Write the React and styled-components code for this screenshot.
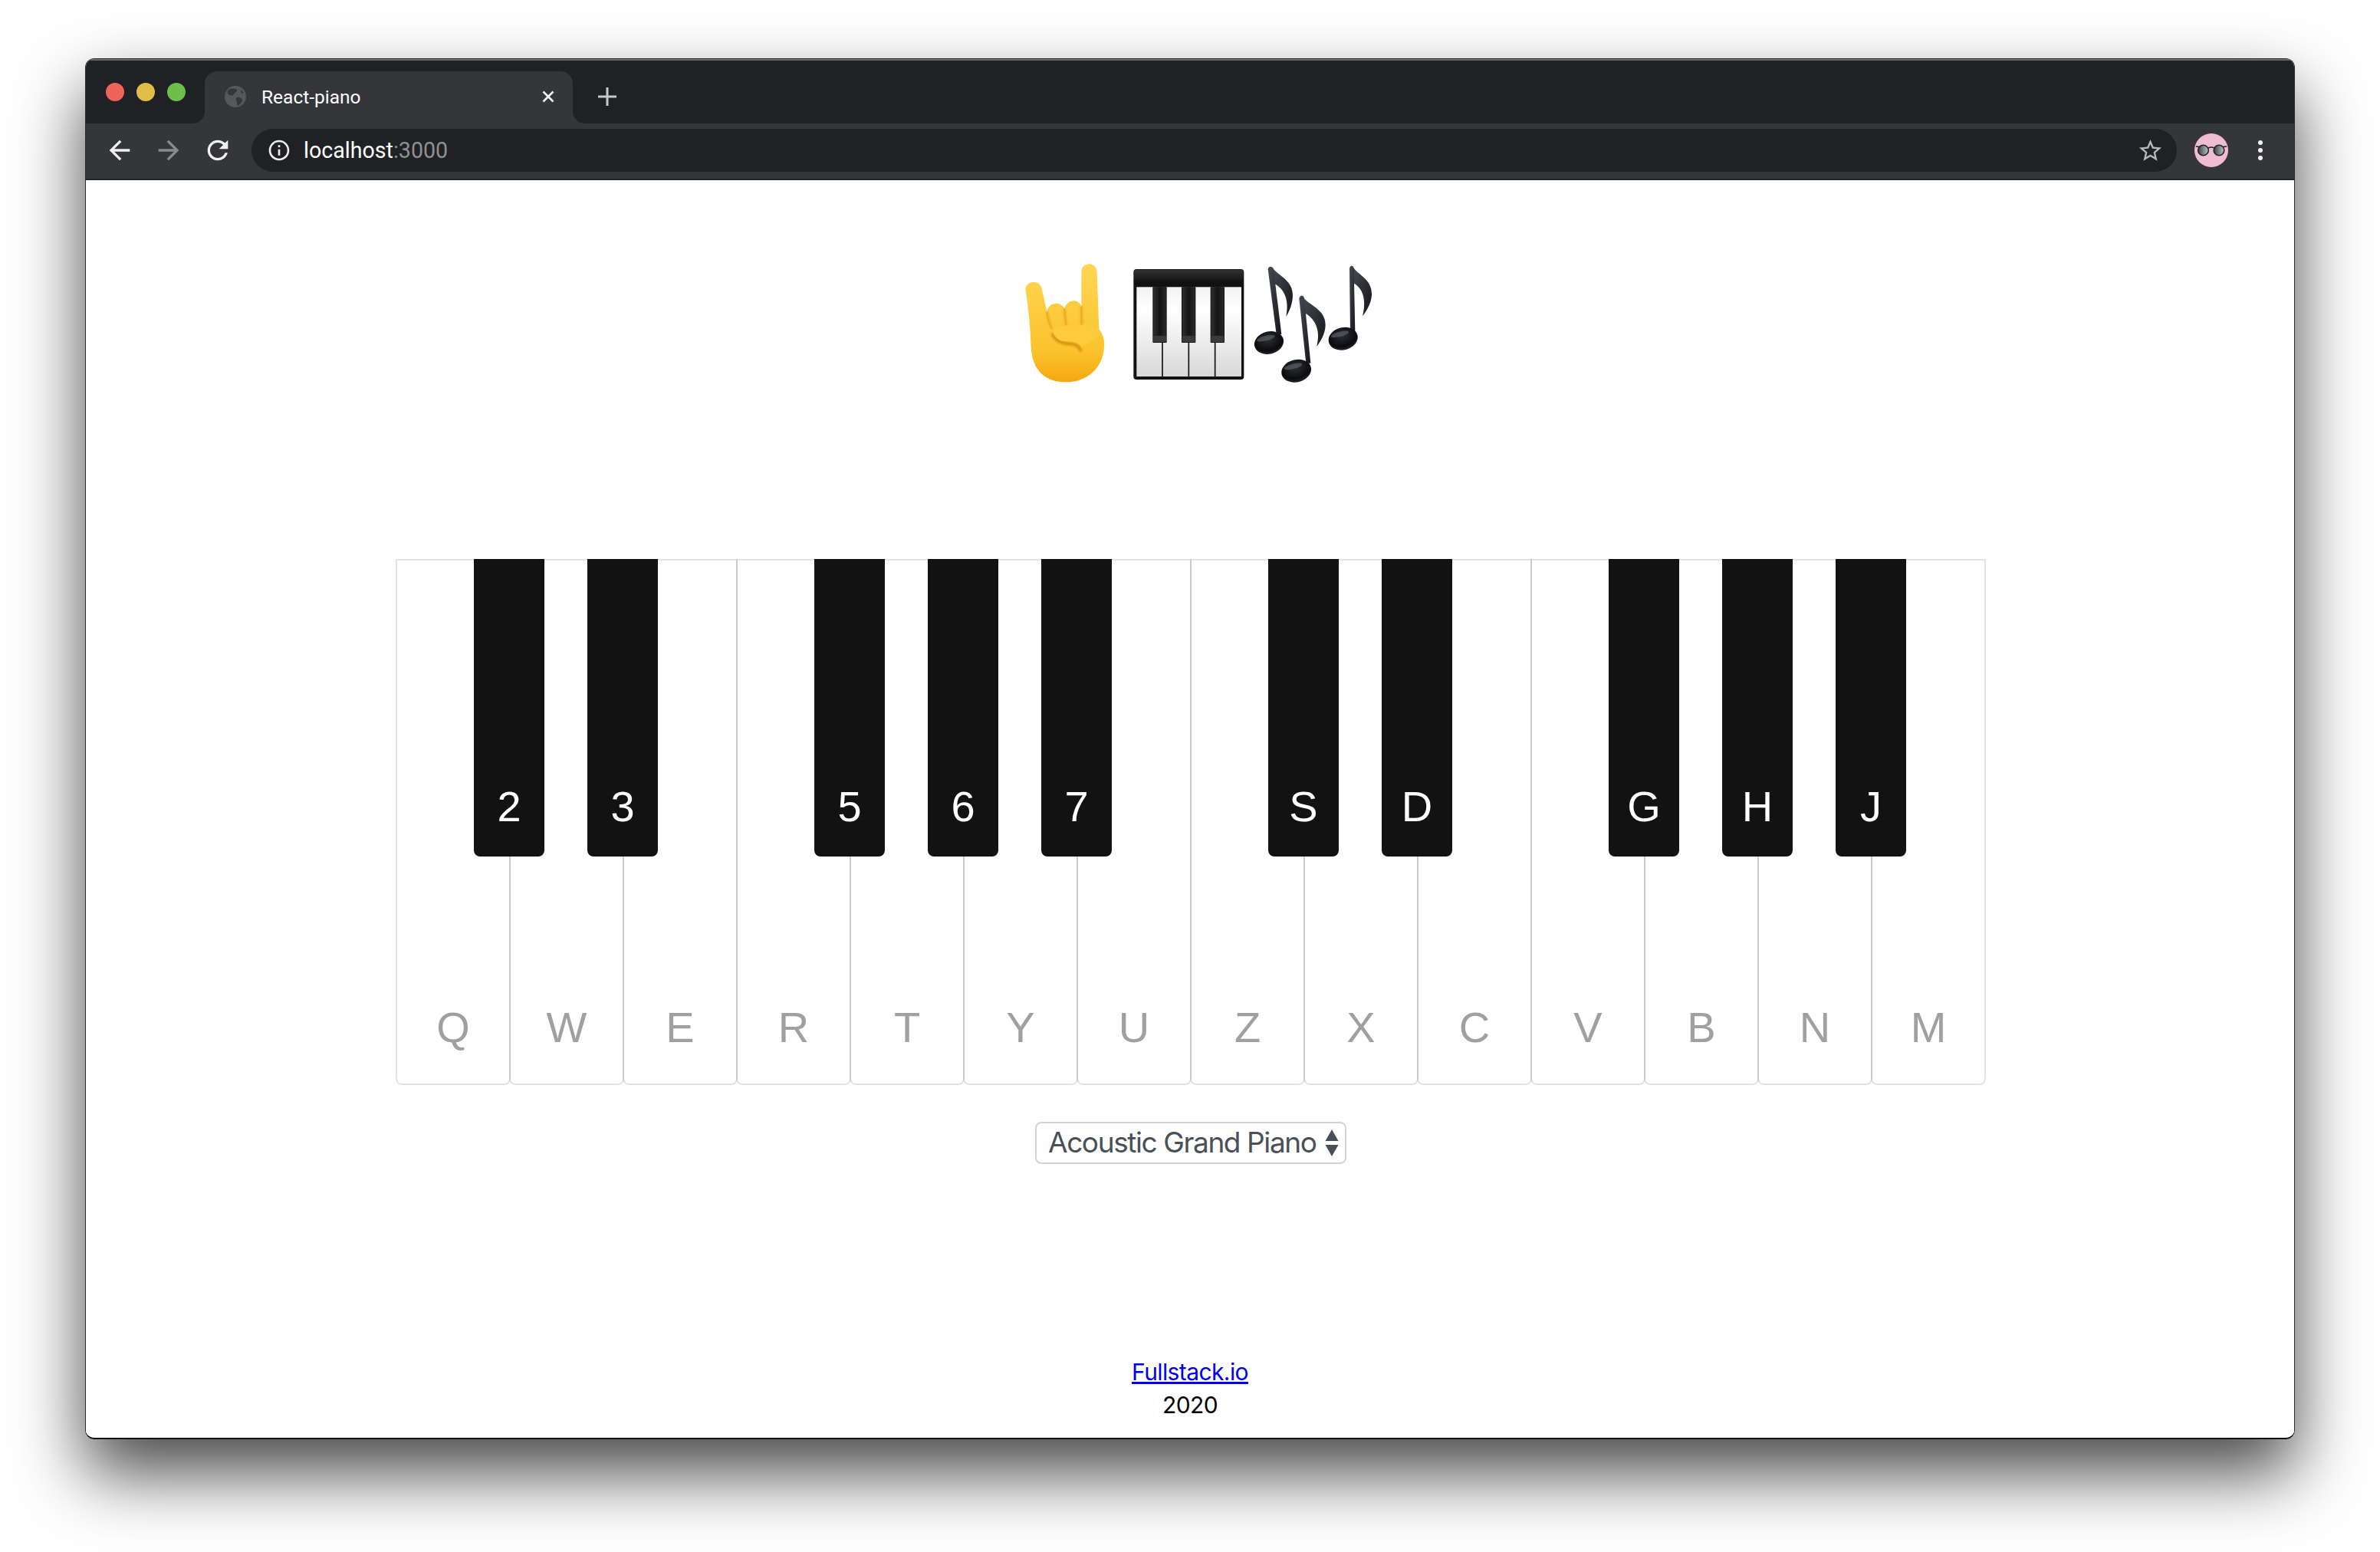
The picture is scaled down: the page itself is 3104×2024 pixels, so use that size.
import React from "react";
import styled, { createGlobalStyle } from "styled-components";

const Global = createGlobalStyle`
  html, body { margin: 0; padding: 0; background: #fff; }
  body { width: 3104px; height: 2024px; overflow: hidden; }
`;

const Page = styled.div`
  width: 3104px;
  height: 2024px;
  box-sizing: border-box;
  padding: 76px 111px 147px;
  display: flex;
  background: #fff;
`;

const Window = styled.div`
  flex: 1;
  display: flex;
  flex-direction: column;
  border-radius: 12px;
  overflow: hidden;
  border: 1.5px solid #2c2c2e;
  border-bottom: 2px solid #111;
  box-shadow: 0 44px 90px rgba(0, 0, 0, 0.72);
`;

const TitleBar = styled.div`
  height: 84px;
  flex: none;
  display: flex;
  align-items: flex-end;
  background: #202124;
  box-shadow: inset 0 2px 0 #6a6a6c;
  padding-left: 155px;
`;

const Lights = styled.div`
  position: absolute;
  display: flex;
  gap: 16px;
  margin-left: -129px;
  margin-bottom: 29px;
`;

const Light = styled.span`
  width: 24px;
  height: 24px;
  border-radius: 50%;
  background: ${(p) => p.$color};
`;

const Tab = styled.div`
  position: relative;
  width: 480px;
  height: 68px;
  box-sizing: border-box;
  background: #35363a;
  border-radius: 16px 16px 0 0;
  display: flex;
  align-items: center;
  padding: 0 16px 2px 26px;
  &::before, &::after {
    content: "";
    position: absolute;
    bottom: 0;
    width: 16px;
    height: 16px;
  }
  &::before {
    left: -16px;
    background: radial-gradient(circle at 0 0, #202124 15.5px, #35363a 16.5px);
  }
  &::after {
    right: -16px;
    background: radial-gradient(circle at 100% 0, #202124 15.5px, #35363a 16.5px);
  }
`;

const TabTitle = styled.span`
  flex: 1;
  margin-left: 20px;
  font: 400 24.5px "Roboto", sans-serif;
  color: #fff;
`;

const NewTab = styled.svg`
  width: 26px;
  height: 26px;
  margin: 0 0 22px 32px;
`;

const Toolbar = styled.div`
  height: 74px;
  flex: none;
  box-sizing: border-box;
  background: #35363a;
  border-bottom: 2px solid #202124;
  display: flex;
  align-items: center;
  padding: 0 41px 2px 24px;
`;

const NavIcon = styled.svg`
  width: 40px;
  height: 40px;
  margin-right: ${(p) => p.$gap || 24}px;
  fill: ${(p) => p.$color || "#f1f1f2"};
  flex: none;
`;

const Omnibox = styled.div`
  flex: 1;
  height: 56px;
  border-radius: 28px;
  background: #202124;
  display: flex;
  align-items: center;
  padding: 0 0 0 20px;
`;

const InfoIcon = styled.svg`
  width: 32px;
  height: 32px;
  fill: #ededee;
  flex: none;
`;

const Url = styled.div`
  flex: 1;
  margin-left: 16px;
  font: 400 28.6px "Roboto", sans-serif;
  color: #fff;
  span { color: #8f9093; }
`;

const StarIcon = styled.svg`
  width: 35px;
  height: 35px;
  fill: #b7b8b9;
  margin-right: 17px;
`;

const Avatar = styled.svg`
  width: 46px;
  height: 46px;
  margin: 0 38px 0 22px;
  flex: none;
`;

const Dots = styled.div`
  display: flex;
  flex-direction: column;
  gap: 4px;
  i { width: 6px; height: 6px; border-radius: 50%; background: #f1f1f2; }
`;

const Content = styled.main`
  flex: 1;
  min-height: 0;
  background: #fff;
  display: flex;
  flex-direction: column;
  align-items: center;
`;

const Hero = styled.div`
  display: flex;
  margin-top: 106px;
  height: 162px;
`;

const Emoji = styled.svg`
  width: 162px;
  height: 162px;
`;

const Keyboard = styled.div`
  display: flex;
  margin-top: 226px;
  margin-left: 2px;
`;

const WhiteKey = styled.div`
  position: relative;
  width: 150px;
  height: 686px;
  box-sizing: border-box;
  margin-left: ${(p) => (p.$first ? 0 : -2)}px;
  border: 2px solid rgba(0, 0, 0, 0.11);
  border-radius: 0 0 8px 8px;
  display: flex;
  justify-content: center;
  align-items: flex-end;
  padding-bottom: 40px;
  font: 400 56px/1.2 "Liberation Sans", sans-serif;
  color: #a0a0a0;
`;

const BlackKey = styled.div`
  position: absolute;
  z-index: 1;
  top: -2px;
  left: 100px;
  width: 92px;
  height: 388px;
  box-sizing: border-box;
  background: #121212;
  border-radius: 0 0 8px 8px;
  display: flex;
  justify-content: center;
  align-items: flex-end;
  padding-bottom: 32px;
  color: #fff;
`;

const SelectWrap = styled.div`
  position: relative;
  margin: 48px 0 0 2px;
  width: 406px;
  height: 55px;
`;

const Select = styled.select`
  appearance: none;
  width: 100%;
  height: 100%;
  box-sizing: border-box;
  background: #fff;
  border: 2px solid #ced4da;
  border-radius: 8px;
  padding: 0 0 2px 15px;
  font: 400 37px "Inter", sans-serif;
  letter-spacing: -1.4px;
  color: #495057;
`;

const Carets = styled.svg`
  position: absolute;
  right: 10px;
  top: 10px;
  width: 18px;
  height: 36px;
  fill: #495057;
  pointer-events: none;
`;

const Footer = styled.footer`
  margin-top: auto;
  padding-bottom: 20px;
  text-align: center;
  font: 400 30px/45px "Inter", sans-serif;
  letter-spacing: -0.6px;
  color: #000;
  a { display: block; color: #0000ee; margin-bottom: -2px; }
`;

const KEYS = [
  ["Q", "2"], ["W", "3"], ["E"], ["R", "5"], ["T", "6"], ["Y", "7"], ["U"],
  ["Z", "S"], ["X", "D"], ["C"], ["V", "G"], ["B", "H"], ["N", "J"], ["M"],
];

function Note({ head, stem, flag }) {
  return (
    <g>
      <path d={flag} fill="url(#noteFlag)" />
      <path d={stem} fill="url(#noteFlag)" />
      <ellipse cx={head[0]} cy={head[1]} rx={head[2]} ry={head[3]} transform={`rotate(-14 ${head[0]} ${head[1]})`} fill="url(#noteHead)" />
      <ellipse cx={head[0] - 8} cy={head[1] - 20} rx={head[2] * 0.62} ry={head[3] * 0.22} transform={`rotate(-14 ${head[0]} ${head[1]})`} fill="#6b6f75" opacity="0.55" />
    </g>
  );
}

function HandEmoji() {
  return (
    <Emoji viewBox="27 60 486 486">
      <defs>
        <linearGradient id="hand" x1="0" y1="0" x2="0" y2="1">
          <stop offset="0" stopColor="#ffd655" />
          <stop offset="0.75" stopColor="#fbc22c" />
          <stop offset="1" stopColor="#f3a810" />
        </linearGradient>
        <filter id="soft" x="-20%" y="-20%" width="140%" height="140%">
          <feGaussianBlur stdDeviation="5" />
        </filter>
      </defs>
      <path fill="url(#hand)" d="M113 175C110 152 128 140 146 140C165 140 175 155 178 175L196 255C200 235 215 224 232 224C248 224 260 232 265 245C270 225 285 214 300 214C315 214 326 222 331 235L331 100C331 82 345 70 362 70C380 70 392 85 392 103L400 325C416 345 423 368 420 395C415 480 350 532 270 532C185 532 138 480 134 395C132 340 128 270 113 175Z" />
      <path d="M197 258C199 282 205 302 216 322M265 245C266 270 268 290 272 310M331 235L332 308" stroke="#e6a512" strokeWidth="7" fill="none" filter="url(#soft)" />
      <path d="M196 255C198 280 204 300 214 322M265 245C266 270 268 290 272 310M331 235L332 308" stroke="#e8aa16" strokeWidth="3" fill="none" />
      <path d="M218 345C232 372 255 382 290 382C312 384 322 392 328 408" stroke="#d88f0c" strokeWidth="12" fill="none" strokeLinecap="round" filter="url(#soft)" />
      <path fill="#fdcb3c" d="M222 335C222 318 238 312 255 312L340 308C370 310 395 320 404 335C392 372 350 376 332 396C322 376 300 374 262 372C240 368 222 354 222 335Z" />
    </Emoji>
  );
}

function PianoEmoji() {
  return (
    <Emoji viewBox="513 60 486 486">
      <defs>
        <linearGradient id="pianoTop" x1="0" y1="0" x2="0" y2="1">
          <stop offset="0" stopColor="#323234" />
          <stop offset="1" stopColor="#161617" />
        </linearGradient>
        <linearGradient id="pianoWhite" x1="0" y1="0" x2="0" y2="1">
          <stop offset="0" stopColor="#f2f2f2" />
          <stop offset="0.25" stopColor="#ffffff" />
          <stop offset="1" stopColor="#d8d8d8" />
        </linearGradient>
        <linearGradient id="pianoBlack" x1="0" y1="0" x2="1" y2="0">
          <stop offset="0" stopColor="#303030" />
          <stop offset="0.5" stopColor="#141414" />
          <stop offset="1" stopColor="#2a2a2a" />
        </linearGradient>
      </defs>
      <rect x="535" y="90" width="432" height="432" rx="12" fill="#111" />
      <rect x="537" y="92" width="428" height="43" rx="7" fill="url(#pianoTop)" />
      <rect x="547" y="160" width="410" height="350" fill="url(#pianoWhite)" />
      <path d="M648 378V512M751 378V512M854 378V512" stroke="#111" strokeWidth="5" />
      {[610, 723, 836].map((x) => (
        <g key={x}>
          <rect x={x} y="160" width="55" height="218" rx="3" fill="#111" />
          <rect x={x + 3} y="160" width="49" height="190" fill="url(#pianoBlack)" />
          <rect x={x + 2} y="350" width="51" height="26" rx="2" fill="#3a3a3a" />
        </g>
      ))}
    </Emoji>
  );
}

function NotesEmoji() {
  return (
    <Emoji viewBox="999 60 486 486">
      <defs>
        <linearGradient id="noteFlag" x1="0" y1="0" x2="1" y2="1">
          <stop offset="0" stopColor="#474a52" />
          <stop offset="1" stopColor="#15161a" />
        </linearGradient>
        <radialGradient id="noteHead" cx="0.5" cy="0.35" r="0.7">
          <stop offset="0" stopColor="#2c2e33" />
          <stop offset="0.7" stopColor="#0c0c0f" />
          <stop offset="1" stopColor="#2b2d33" />
        </radialGradient>
      </defs>
      <Note
        head={[1065, 378, 58, 44]}
        stem="M1061 90C1064 76 1080 78 1083 92L1114 345L1094 345Z"
        flag="M1078 82C1095 115 1160 130 1158 195C1157 225 1145 255 1132 276C1142 225 1135 175 1088 148Z"
      />
      <Note
        head={[1172, 488, 59, 44]}
        stem="M1183 205C1186 190 1200 190 1203 204L1228 458L1210 458Z"
        flag="M1196 196C1215 230 1288 245 1286 310C1285 340 1270 370 1252 392C1265 340 1255 290 1205 262Z"
      />
      <Note
        head={[1355, 362, 58, 44]}
        stem="M1380 88C1381 74 1395 74 1397 88L1402 335L1383 335Z"
        flag="M1392 78C1408 112 1468 125 1467 190C1466 220 1450 250 1431 274C1444 222 1440 170 1396 145Z"
      />
    </Emoji>
  );
}

export default function App() {
  return (
    <>
      <Global />
      <Page>
        <Window>
          <TitleBar>
            <Lights>
              <Light $color="#ee6459" />
              <Light $color="#e0bd46" />
              <Light $color="#6cc04a" />
            </Lights>
            <Tab>
              <svg width="28" height="28" viewBox="0 0 28 28">
                <circle cx="14" cy="14" r="14" fill="#55575b" />
                <path d="M5 5C9 3 14 3 16 5C17 8 12 9 11 12C9 14 6 12 4 10C3 8 4 6 5 5ZM16 15C19 14 23 16 23 19C21 23 19 25 17 26C15 24 17 21 15 19C14 17 15 16 16 15ZM21 5L25 9L22 10Z" fill="#35363a" />
              </svg>
              <TabTitle>React-piano</TabTitle>
              <svg width="16" height="16" viewBox="0 0 16 16" style={{ marginRight: 8 }}>
                <path d="M1.5 1.5L14.5 14.5M14.5 1.5L1.5 14.5" stroke="#f5f5f5" strokeWidth="2.6" />
              </svg>
            </Tab>
            <NewTab viewBox="0 0 26 26">
              <path d="M13 1V25M1 13H25" stroke="#c8c9ca" strokeWidth="3" />
            </NewTab>
          </TitleBar>
          <Toolbar>
            <NavIcon viewBox="0 0 24 24"><path d="M20 11H7.83l5.59-5.59L12 4l-8 8 8 8 1.41-1.41L7.83 13H20v-2z" /></NavIcon>
            <NavIcon viewBox="0 0 24 24" $color="#8a8b8d"><path d="M4 11h12.17l-5.59-5.59L12 4l8 8-8 8-1.41-1.41L16.17 13H4v-2z" /></NavIcon>
            <NavIcon viewBox="0 0 24 24"><path d="M17.65 6.35C16.2 4.9 14.21 4 12 4c-4.42 0-7.99 3.58-7.99 8s3.57 8 7.99 8c3.73 0 6.84-2.55 7.73-6h-2.08c-.82 2.33-3.04 4-5.65 4-3.31 0-6-2.69-6-6s2.69-6 6-6c1.66 0 3.14.69 4.22 1.78L13 11h7V4l-2.35 2.35z" /></NavIcon>
            <Omnibox>
              <InfoIcon viewBox="0 0 24 24"><path d="M11 7h2v2h-2zm0 4h2v6h-2zm1-9C6.48 2 2 6.48 2 12s4.48 10 10 10 10-4.48 10-10S17.52 2 12 2zm0 18c-4.41 0-8-3.59-8-8s3.59-8 8-8 8 3.59 8 8-3.59 8-8 8z" /></InfoIcon>
              <Url>localhost<span>:3000</span></Url>
              <StarIcon viewBox="0 0 24 24"><path d="M22 9.24l-7.19-.62L12 2 9.19 8.63 2 9.24l5.46 4.73L5.82 21 12 17.27 18.18 21l-1.63-7.03L22 9.24zM12 15.4l-3.76 2.27 1-4.28-3.32-2.88 4.38-.38L12 6.1l1.71 4.04 4.38.38-3.32 2.88 1 4.28L12 15.4z" /></StarIcon>
            </Omnibox>
            <Avatar viewBox="0 0 46 46">
              <defs>
                <linearGradient id="lens" x1="0" y1="0" x2="1" y2="0">
                  <stop offset="0" stopColor="#3b3f40" />
                  <stop offset="1" stopColor="#b8c8c8" />
                </linearGradient>
              </defs>
              <circle cx="23" cy="23" r="22" fill="#efbcd2" />
              <path d="M3 18L12 19M34 19L43 18M19 20Q23 18 27 20" stroke="#222" strokeWidth="1.6" fill="none" />
              <circle cx="12.5" cy="23" r="6.8" fill="url(#lens)" stroke="#222" strokeWidth="1.6" />
              <circle cx="33" cy="23" r="6.8" fill="url(#lens)" stroke="#222" strokeWidth="1.6" />
            </Avatar>
            <Dots><i /><i /><i /></Dots>
          </Toolbar>
          <Content>
            <Hero>
              <HandEmoji />
              <PianoEmoji />
              <NotesEmoji />
            </Hero>
            <Keyboard>
              {KEYS.map(([w, b], i) => (
                <WhiteKey key={w} $first={i === 0}>
                  {w}
                  {b && <BlackKey>{b}</BlackKey>}
                </WhiteKey>
              ))}
            </Keyboard>
            <SelectWrap>
              <Select defaultValue="acoustic_grand_piano">
                <option value="acoustic_grand_piano">Acoustic Grand Piano</option>
              </Select>
              <Carets viewBox="0 0 18 36">
                <path d="M9 0L17.5 15H0.5Z" />
                <path d="M0.5 20H17.5L9 35Z" />
              </Carets>
            </SelectWrap>
            <Footer>
              <a href="#fullstack">Fullstack.io</a>
              2020
            </Footer>
          </Content>
        </Window>
      </Page>
    </>
  );
}
